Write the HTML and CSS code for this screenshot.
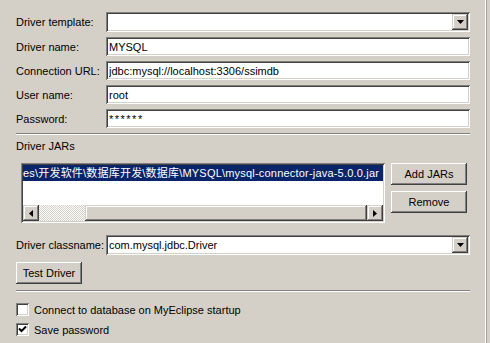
FILE: index.html
```html
<!DOCTYPE html>
<html>
<head>
<meta charset="utf-8">
<link rel="stylesheet" href="styles.css">
</head>
<body>
<div class="window">
  <div class="panel">
    <div class="fields">
      <div class="row first">
        <span class="label">Driver template:</span>
        <div class="field combo">
          <span class="value"></span>
          <span class="drop"><svg width="7" height="4" viewBox="0 0 7 4"><path d="M0 0h7L3.5 4z" fill="#000"/></svg></span>
        </div>
      </div>
      <div class="row">
        <span class="label">Driver name:</span>
        <div class="field"><span class="value">MYSQL</span></div>
      </div>
      <div class="row">
        <span class="label">Connection URL:</span>
        <div class="field"><span class="value">jdbc:mysql://localhost:3306/ssimdb</span></div>
      </div>
      <div class="row">
        <span class="label">User name:</span>
        <div class="field"><span class="value">root</span></div>
      </div>
      <div class="row">
        <span class="label">Password:</span>
        <div class="field"><span class="value pw">******</span></div>
      </div>
    </div>
    <div class="sep"></div>
    <div class="section-label">Driver JARs</div>
    <div class="jars">
      <div class="list">
        <div class="list-view">
          <div class="item">es\开发软件\数据库开发\数据库\MYSQL\mysql-connector-java-5.0.0.jar</div>
        </div>
        <div class="hscroll">
          <span class="sbtn"><svg width="4" height="7" viewBox="0 0 4 7"><path d="M4 0v7L0 3.5z" fill="#000"/></svg></span>
          <span class="track"><span class="thumb"></span></span>
          <span class="sbtn"><svg width="4" height="7" viewBox="0 0 4 7"><path d="M0 0v7L4 3.5z" fill="#000"/></svg></span>
        </div>
      </div>
      <div class="jar-buttons">
        <div class="btn jar-btn">Add JARs</div>
        <div class="btn jar-btn">Remove</div>
      </div>
    </div>
    <div class="row classname">
      <span class="label">Driver classname:</span>
      <div class="field combo">
        <span class="value">com.mysql.jdbc.Driver</span>
        <span class="drop"><svg width="7" height="4" viewBox="0 0 7 4"><path d="M0 0h7L3.5 4z" fill="#000"/></svg></span>
      </div>
    </div>
    <div class="btn test-btn">Test Driver</div>
    <div class="sep sep2"></div>
    <div class="check-row first-check">
      <span class="checkbox"></span>
      <span>Connect to database on MyEclipse startup</span>
    </div>
    <div class="check-row">
      <span class="checkbox"><svg width="9" height="9" viewBox="0 0 9 9"><path d="M1 3.5L3.5 6L8 1.5" fill="none" stroke="#000" stroke-width="2"/></svg></span>
      <span>Save password</span>
    </div>
  </div>
  <div class="edge"></div>
</div>
</body>
</html>
```
FILE: styles.css
```css
* { box-sizing: border-box; }
html, body {
  margin: 0;
  padding: 0;
  background: #d4d0c8;
}
body {
  font-family: "Liberation Sans", Arial, "Noto Sans CJK SC", sans-serif;
  font-size: 11px;
  color: #000;
  width: 490px;
  height: 343px;
  overflow: hidden;
}
.window {
  display: flex;
  height: 343px;
}
.panel {
  width: 470px;
  padding: 12px 0 0 16px;
  display: flex;
  flex-direction: column;
}
.edge {
  margin-left: 15px;
  width: 2px;
  border-left: 1px solid #ffffff;
  border-right: 1px solid #a0a0a0;
}
.fields {
  display: flex;
  flex-direction: column;
  gap: 5px;
}
.row {
  display: flex;
  align-items: center;
  height: 19px;
}
.row.first { height: 20px; }
.label {
  width: 90px;
  flex: none;
  white-space: nowrap;
}
.field {
  flex: 1;
  height: 100%;
  background: #fff;
  box-shadow: inset 1px 1px #808080, inset -1px -1px #fff, inset 2px 2px #404040, inset -2px -2px #d4d0c8;
  display: flex;
  align-items: center;
  padding: 0 2px 0 3px;
}
.value {
  flex: 1;
  white-space: nowrap;
  overflow: hidden;
}
.pw { letter-spacing: 1.5px; }
.combo { padding-right: 2px; }
.drop {
  flex: none;
  width: 16px;
  height: 16px;
  background: #d4d0c8;
  box-shadow: inset -1px -1px #404040, inset 1px 1px #d4d0c8, inset -2px -2px #808080, inset 2px 2px #fff;
  display: flex;
  align-items: center;
  justify-content: center;
}
.sep {
  margin-top: 5px;
  height: 2px;
  border-top: 1px solid #808080;
  border-bottom: 1px solid #fff;
}
.section-label {
  margin-top: 5px;
  line-height: 13px;
}
.jars {
  margin-top: 10px;
  display: flex;
  align-items: flex-start;
  padding-left: 5px;
}
.list {
  width: 364px;
  height: 60px;
  background: #fff;
  padding: 2px;
  box-shadow: inset 1px 1px #808080, inset -1px -1px #fff, inset 2px 2px #404040, inset -2px -2px #d4d0c8;
  display: flex;
  flex-direction: column;
}
.list-view {
  flex: 1;
  overflow: hidden;
  display: flex;
  align-items: flex-start;
}
.item {
  flex: 1;
  white-space: nowrap;
  background: #0a246a;
  color: #fff;
  height: 16px;
  line-height: 16px;
  padding: 0 0 0 0;
  letter-spacing: 0.2px;
}
.hscroll {
  height: 16px;
  display: flex;
}
.sbtn {
  flex: none;
  width: 16px;
  height: 16px;
  background: #d4d0c8;
  box-shadow: inset -1px -1px #404040, inset 1px 1px #d4d0c8, inset -2px -2px #808080, inset 2px 2px #fff;
  display: flex;
  align-items: center;
  justify-content: center;
}
.track {
  flex: 1;
  display: flex;
  justify-content: flex-end;
  background: repeating-conic-gradient(#ffffff 0 25%, #d4d0c8 0 50%) 0 0 / 2px 2px;
}
.thumb {
  width: 282px;
  height: 16px;
  background: #d4d0c8;
  box-shadow: inset -1px -1px #404040, inset 1px 1px #d4d0c8, inset -2px -2px #808080, inset 2px 2px #fff;
}
.jar-buttons {
  margin-left: 6px;
  display: flex;
  flex-direction: column;
  gap: 6px;
}
.btn {
  background: #d4d0c8;
  box-shadow: inset -1px -1px #404040, inset 1px 1px #fff, inset -2px -2px #808080, inset 2px 2px #d4d0c8;
  display: flex;
  align-items: center;
  justify-content: center;
  white-space: nowrap;
}
.jar-btn {
  width: 76px;
  height: 22px;
}
.classname {
  margin-top: 12px;
  height: 20px;
}
.test-btn {
  margin-top: 7px;
  width: 66px;
  height: 22px;
}
.sep2 { margin-top: 6px; }
.check-row {
  display: flex;
  align-items: center;
  gap: 5px;
  height: 13px;
  margin-top: 7px;
}
.check-row.first-check { margin-top: 11px; }
.checkbox {
  width: 13px;
  height: 13px;
  flex: none;
  background: #fff;
  box-shadow: inset 1px 1px #808080, inset -1px -1px #fff, inset 2px 2px #404040, inset -2px -2px #d4d0c8;
  display: flex;
  align-items: center;
  justify-content: center;
}
```
